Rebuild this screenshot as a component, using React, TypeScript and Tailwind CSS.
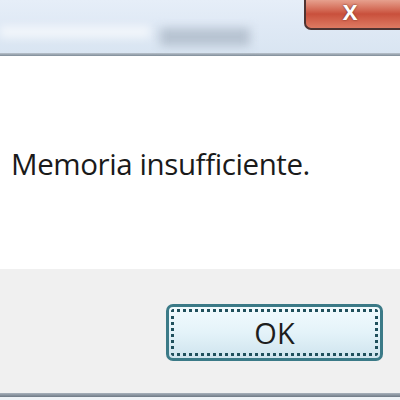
export default function App() {
  return (
    <div className="w-[400px] h-[400px] overflow-hidden flex flex-col bg-white" style={{ fontFamily: '"Open Sans", "Noto Sans", sans-serif' }}>
      {/* title bar */}
      <div className="relative h-[53px] shrink-0 bg-gradient-to-b from-[#e6eef8] via-[#dfe9f5] to-[#d9e5f2]">
        <div className="absolute left-[0px] top-[26px] w-[150px] h-[12px] bg-white/60 blur-[4px]" />
        <div className="absolute left-[160px] top-[28px] w-[90px] h-[18px] bg-[#b7c3d1] blur-[5px]" />
        <div className="absolute left-[304px] top-0 w-[96px] h-[30px] rounded-bl-[7px] border-2 border-t-0 border-r-0 border-[#4e3432] bg-gradient-to-b from-[#e6a08e] via-[#c9503c] to-[#de7a62] flex items-start justify-center">
          <span className="text-white font-bold text-[22px] leading-none ml-[-6px] [text-shadow:0_0_2px_#5a2a20]">X</span>
        </div>
      </div>
      <div className="h-[3px] shrink-0 bg-gradient-to-b from-[#b9c2cc] to-[#7f8c98]" />
      {/* content */}
      <div className="h-[213px] shrink-0 bg-white pl-[11px] pt-[93px]">
        <p className="text-[29.5px] leading-none text-[#1a1a1a] tracking-[-0.4px]">Memoria insufficiente.</p>
      </div>
      {/* footer */}
      <div className="h-[124px] shrink-0 bg-[#f0f0f0] flex justify-end items-start pt-[35px] pr-[17px]">
        <button className="w-[217px] h-[57px] rounded-[7px] border-[3px] border-[#3b7a87] bg-gradient-to-b from-[#f2fbfe] via-[#e4f3f9] to-[#cfe4ee] p-[2px]">
          <div className="w-full h-full rounded-[3px] border-[3px] border-dotted border-[#20505c] flex items-center justify-center">
            <span className="text-[29px] leading-none text-[#1e1e1e]">OK</span>
          </div>
        </button>
      </div>
      <div className="h-[4px] shrink-0 bg-gradient-to-b from-[#a9b2bc] to-[#6f7a86]" />
      <div className="flex-1 bg-[#eef2f6]" />
    </div>
  );
}
